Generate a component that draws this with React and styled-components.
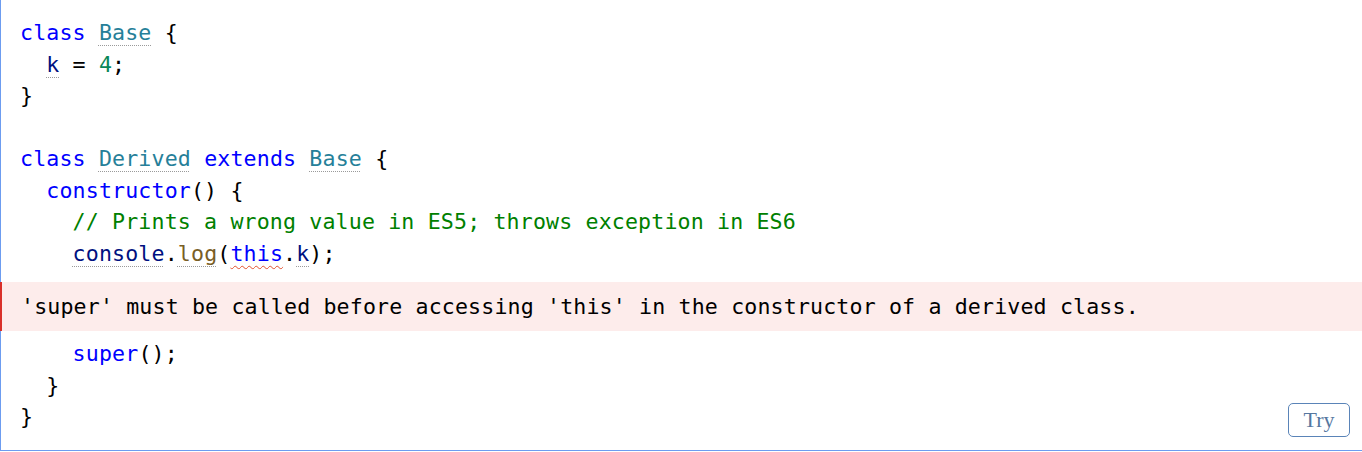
import React from 'react'
import styled, {createGlobalStyle} from 'styled-components'

const Global = createGlobalStyle`
  html, body {
    margin: 0;
    padding: 0;
    background: #fff;
  }
`

const Wrapper = styled.div`
  position: relative;
  box-sizing: border-box;
  width: 1362px;
  height: 451px;
  border-left: 1px solid #6c9cf0;
  border-bottom: 1px solid #6c9cf0;
  padding: 17px 0 0 0;
  font-family: "DejaVu Sans Mono", "Liberation Mono", monospace;
  font-size: 21.6px;
  letter-spacing: 0.15px;
  color: #000;
`

const Block = styled.div`
  padding-left: 19px;
`

const Line = styled.div`
  height: 31.5px;
  line-height: 31.5px;
  white-space: pre;
`

const ErrorBox = styled.div`
  margin: 13px 0 7px -1px;
  height: 49px;
  line-height: 49px;
  padding-left: 19px;
  background: #fdeceb;
  border-left: 2px solid #d9302a;
  white-space: pre;
`

const Kw = styled.span`
  color: #0000ff;
`

const Type = styled.span`
  color: #267f99;
  text-decoration: underline dotted #9a9a9a;
  text-underline-offset: 5px;
  text-decoration-thickness: 1px;
`

const Ident = styled.span`
  color: #001080;
  text-decoration: ${p => p.$dotted ? 'underline dotted #9a9a9a' : 'none'};
  text-underline-offset: 5px;
  text-decoration-thickness: 1px;
`

const Fn = styled.span`
  color: #795e26;
  text-decoration: underline dotted #9a9a9a;
  text-underline-offset: 5px;
  text-decoration-thickness: 1px;
`

const This = styled.span`
  color: #0000ff;
  text-decoration: underline wavy #e2502c;
  text-underline-offset: 4px;
  text-decoration-thickness: 1px;
`

const Num = styled.span`
  color: #098658;
`

const Comment = styled.span`
  color: #008000;
`

const TryButton = styled.button`
  position: absolute;
  right: 12px;
  bottom: 13px;
  width: 62px;
  height: 34px;
  padding: 0;
  background: #fff;
  border: 1px solid #5a84b8;
  border-radius: 5px;
  color: #56779f;
  font-family: "Liberation Serif", "DejaVu Serif", serif;
  font-size: 22px;
  cursor: pointer;
`

const App = () => {
    return (
        <>
            <Global />
            <Wrapper>
                <Block>
                    <Line><Kw>class</Kw> <Type>Base</Type> {'{'}</Line>
                    <Line>  <Ident $dotted>k</Ident> = <Num>4</Num>;</Line>
                    <Line>{'}'}</Line>
                    <Line> </Line>
                    <Line><Kw>class</Kw> <Type>Derived</Type> <Kw>extends</Kw> <Type>Base</Type> {'{'}</Line>
                    <Line>  <Kw>constructor</Kw>() {'{'}</Line>
                    <Line>    <Comment>// Prints a wrong value in ES5; throws exception in ES6</Comment></Line>
                    <Line>    <Ident $dotted>console</Ident>.<Fn>log</Fn>(<This>this</This>.<Ident $dotted>k</Ident>);</Line>
                </Block>
                <ErrorBox>'super' must be called before accessing 'this' in the constructor of a derived class.</ErrorBox>
                <Block>
                    <Line>    <Kw>super</Kw>();</Line>
                    <Line>  {'}'}</Line>
                    <Line>{'}'}</Line>
                </Block>
                <TryButton>Try</TryButton>
            </Wrapper>
        </>
    )
}

export default App
